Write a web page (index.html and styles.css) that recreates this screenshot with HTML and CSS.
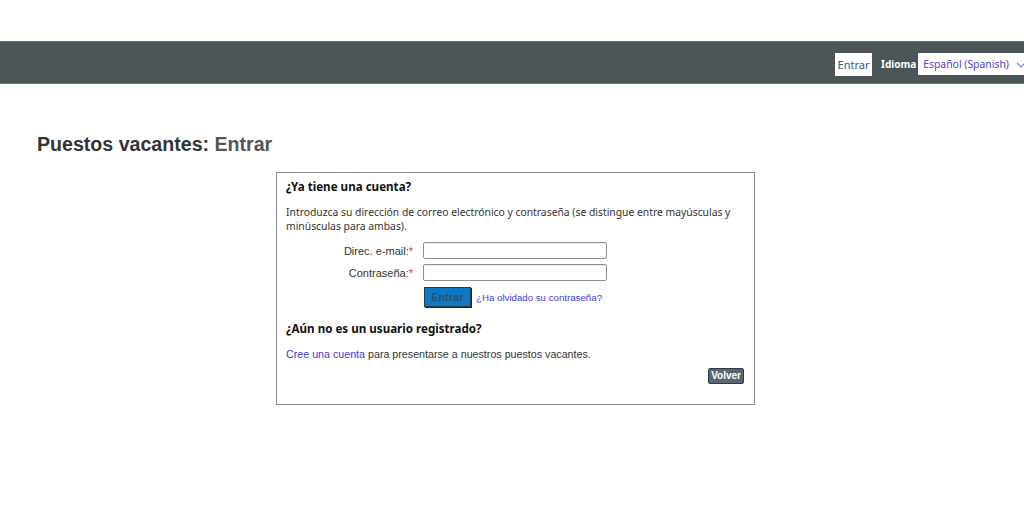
FILE: index.html
```html
<!DOCTYPE html>
<html lang="es">
<head>
<meta charset="UTF-8" />
<title>Puestos vacantes: Entrar</title>
<meta name="viewport" content="width=device-width, initial-scale=1" />
<link rel="stylesheet" href="styles.css">
</head>
<body>
<div class="topspace"></div>
<header id="utilbar">
  <a class="login-btn" href="#">Entrar</a>
  <label class="lang-label" for="langSelect">Idioma</label>
  <div class="lang-select" id="langSelect">
    <span>Español (Spanish)</span>
    <svg width="10" height="6" viewBox="0 0 10 6"><path d="M1 1l4 4 4-4" fill="none" stroke="#7a7fd8" stroke-width="1.1"/></svg>
  </div>
</header>

<h1 class="page-title">Puestos vacantes: <span class="sub">Entrar</span></h1>

<section class="login-card">
  <h2>¿Ya tiene una cuenta?</h2>
  <p class="intro">Introduzca su dirección de correo electrónico y contraseña (se distingue entre mayúsculas y minúsculas para ambas).</p>

  <div class="form-grid">
    <label for="email">Direc. e-mail:<span class="req">*</span></label>
    <input type="text" id="email">
    <label for="pwd">Contraseña:<span class="req">*</span></label>
    <input type="password" id="pwd">
    <span></span>
    <div class="actions">
      <button class="btn-enter" type="button">Entrar</button>
      <a class="forgot" href="#">¿Ha olvidado su contraseña?</a>
    </div>
  </div>

  <h2 class="second">¿Aún no es un usuario registrado?</h2>
  <p class="create"><a href="#">Cree una cuenta</a> para presentarse a nuestros puestos vacantes.</p>

  <div class="back-row"><button class="btn-back" type="button">Volver</button></div>
</section>
</body>
</html>
```

FILE: styles.css
```css
:root {
  --bar:#4b5457;
  --text:#222;
  --muted:#555;
  --link:#3c3bd8;
  --border:#8a8a8a;
  --sans:"Liberation Sans",Arial,sans-serif;
  --body:"Noto Sans","Open Sans",sans-serif;
}

body { margin:0; background:#fff; font-family:var(--sans); color:var(--text); overflow:hidden; }
.topspace { height:41px; }

/* top utility bar: login link and language picker, picker runs off the right edge */
#utilbar { height:43px; background:var(--bar); border-top:1px solid #676f72; border-bottom:1px solid #6c7477; box-sizing:border-box; display:flex; align-items:center; padding-left:835px; padding-top:3px; overflow:hidden; }
#utilbar > * { flex-shrink:0; }
.login-btn { background:#fff; color:#2c5d86; text-decoration:none; font:11px var(--body); width:37px; height:23px; display:flex; align-items:center; justify-content:center; box-sizing:border-box; }
.lang-label { color:#fff; font:bold 10px var(--body); margin-left:9px; }
.lang-select { background:#fff; height:22px; width:120px; box-sizing:border-box; display:flex; align-items:center; gap:7px; padding:0 0 0 5px; margin-left:2px; font:10.4px var(--body); color:#4a42d6; }
.lang-select svg { margin-top:1px; }

.page-title { margin:48px 0 0 37px; font-size:19.6px; font-weight:bold; color:#333; line-height:24px; }
.page-title .sub { color:#555; }

.login-card { width:479px; box-sizing:border-box; margin:16px 0 0 276px; border:1px solid var(--border); padding:6px 9px 20px; font-family:var(--body); }
.login-card h2 { margin:0; font-size:11.6px; font-weight:bold; color:#111; line-height:16px; }
.login-card h2.second { margin-top:14px; }
.intro { margin:10px 0 0; font-size:10.35px; line-height:14px; color:#333; }

.form-grid { display:grid; grid-template-columns:127px 184px; column-gap:10px; row-gap:5px; margin-top:9px; align-items:center; }
.form-grid label { text-align:right; font:11px var(--sans); color:#333; }
.req { color:#d8323c; }
.form-grid input { height:17px; box-sizing:border-box; border:1px solid #8f8f8f; border-radius:2px; margin:0; padding:0 3px; box-shadow:inset 0 1px 1px rgba(0,0,0,.08); }
.actions { display:flex; align-items:center; gap:5px; margin-top:1px; }
.btn-enter { width:47px; height:20px; margin-left:1px; background:#0f78c4; border:1px solid #2a3a48; color:#2b4f6e; font:bold 10px var(--sans); letter-spacing:.5px; padding:0; box-shadow:1px 1px 0 #1a2a38; }
.forgot { color:var(--link); font:9.7px var(--sans); text-decoration:none; }

.create { margin:11px 0 0; font:10.7px var(--sans); color:#333; }
.create a { color:var(--link); text-decoration:none; }

.back-row { display:flex; justify-content:flex-end; margin-top:8px; padding-right:1px; }
.btn-back { background:#5c6670; color:#fff; border:1px solid #2f3a44; border-radius:2px; font:bold 10px var(--sans); padding:1px 2px; height:16px; line-height:12px; }
```
